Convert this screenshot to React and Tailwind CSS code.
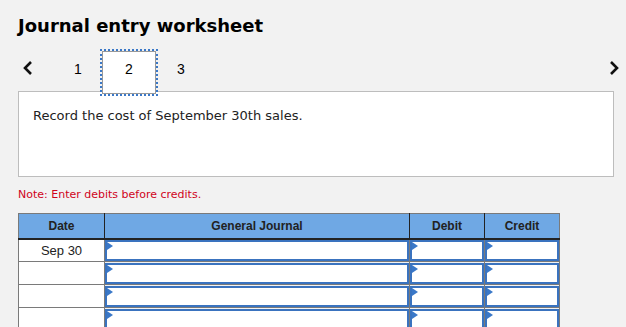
import React from "react";

const rows = ["Sep 30", "", "", ""];

const Flag = () => (
  <span className="absolute left-0 top-0 w-0 h-0 border-t-[4px] border-b-[4px] border-l-[6px] border-t-transparent border-b-transparent border-l-[#3a78c8]" />
);

const InputCell = () => (
  <td className="border border-[#7a7a7a] p-0 h-[23px]">
    <div className="relative h-[21px] border-2 border-[#3a73bf] bg-white">
      <Flag />
    </div>
  </td>
);

const Chevron = ({ dir }) => (
  <svg width="12" height="16" viewBox="0 0 12 16">
    <polyline
      points={dir === "left" ? "9,2 3,8 9,14" : "3,2 9,8 3,14"}
      fill="none"
      stroke="#111"
      strokeWidth="2.6"
      strokeLinejoin="miter"
    />
  </svg>
);

export default function App() {
  return (
    <div className="w-[626px] h-[327px] overflow-hidden bg-[#f2f2f2] pl-[18px] pt-[14px] font-['DejaVu_Sans',sans-serif]">
      <h1 className="text-[18px] leading-[24px] font-bold text-black">Journal entry worksheet</h1>

      <div className="flex items-center h-[41px] mt-[12px] relative z-10">
        <div className="w-[16px] pl-[4px] -mt-[6px]">
          <Chevron dir="left" />
        </div>
        <div className="flex items-center font-['Liberation_Sans',sans-serif] text-[14px] leading-[16px] text-black">
          <div className="w-[68px] text-center pl-[20px] -mt-[3px]">1</div>
          <div className="w-[54px] h-[43px] mt-[3px] pt-[9px] bg-white border border-[#999] outline-2 outline-dotted outline-[#3a78c8] text-center">2</div>
          <div className="w-[50px] text-center -mt-[3px]">3</div>
        </div>
        <div className="ml-auto mr-[6px] -mt-[6px]">
          <Chevron dir="right" />
        </div>
      </div>

      <div className="w-[596px] h-[86px] bg-white border border-[#bdbdbd] px-[14px] pt-[14px] text-[13px] text-[#222]">
        Record the cost of September 30th sales.
      </div>

      <p className="mt-[11px] text-[11px] leading-[14px] text-[#d0021b]">Note: Enter debits before credits.</p>

      <table className="mt-[11px] border-collapse border border-[#7a7a7a] font-['Liberation_Sans',sans-serif] text-[13px]">
        <thead>
          <tr className="bg-[#6fa8e4] h-[25px] text-[12px] font-bold text-[#222]">
            <th className="w-[86px] border-r border-[#222] border-b-2 border-b-[#222]">Date</th>
            <th className="w-[305px] border-r border-[#222] border-b-2 border-b-[#222]">General Journal</th>
            <th className="w-[75px] border-r border-[#222] border-b-2 border-b-[#222]">Debit</th>
            <th className="w-[75px] border-b-2 border-b-[#222]">Credit</th>
          </tr>
        </thead>
        <tbody>
          {rows.map((d, i) => (
            <tr key={i}>
              <td className="border border-[#7a7a7a] bg-white text-center text-[#222] h-[23px]">{d}</td>
              <InputCell />
              <InputCell />
              <InputCell />
            </tr>
          ))}
        </tbody>
      </table>
    </div>
  );
}
